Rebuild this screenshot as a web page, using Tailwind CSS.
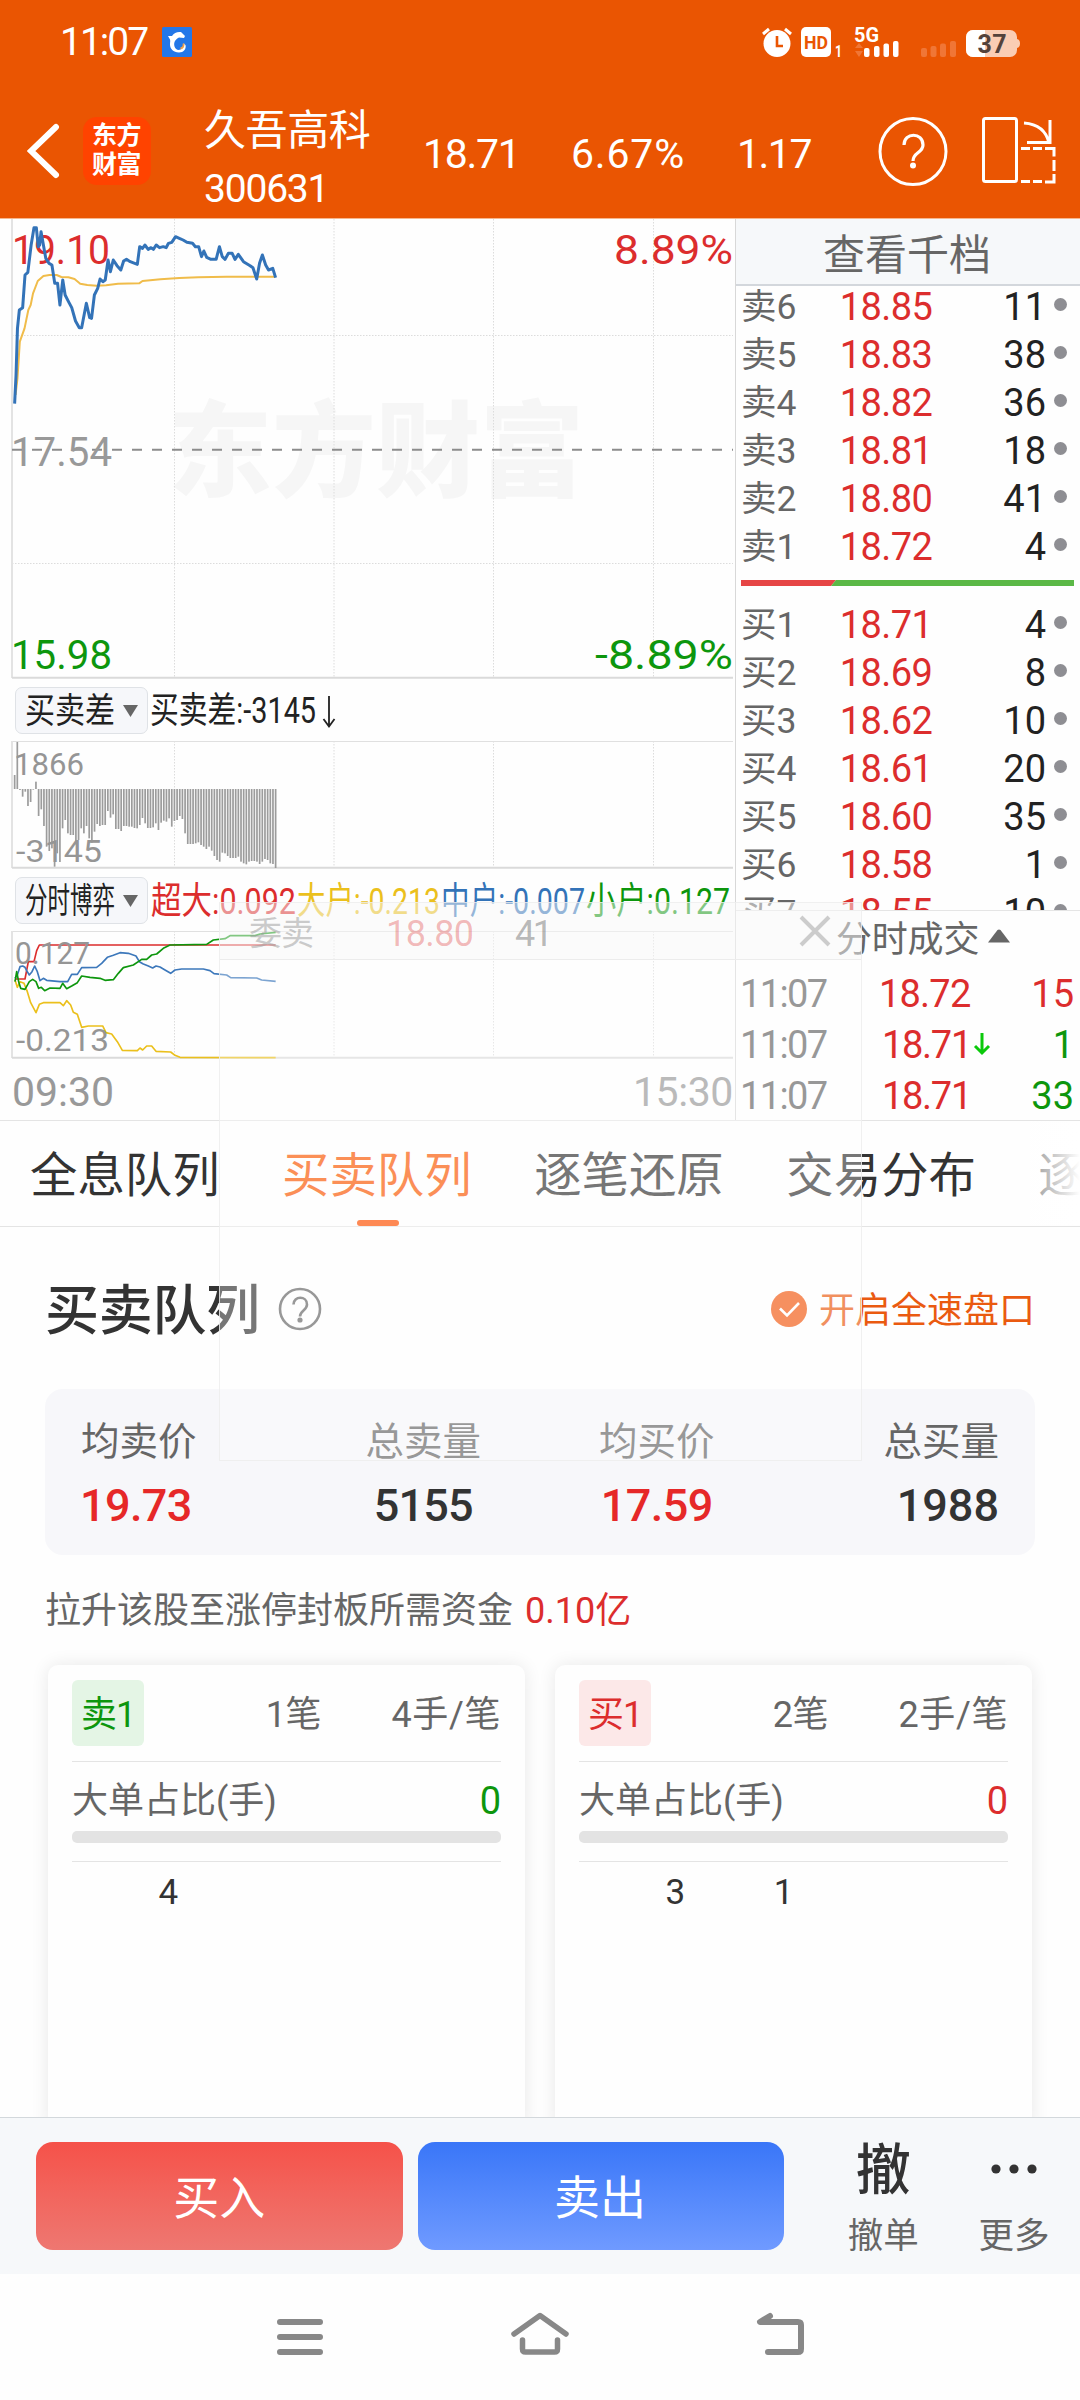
<!DOCTYPE html>
<html lang="zh-CN">
<head>
    <meta charset="UTF-8">
    <meta name="viewport" content="width=device-width, initial-scale=1"/>
    <title>久吾高科 300631 - 买卖队列</title>
    <script src="https://cdn.jsdelivr.net/npm/@tailwindcss/browser@4"></script>
</head>

<body class="bg-[#fefefe] font-['Roboto','Noto_Sans_CJK_SC',sans-serif] text-[#333]">
<div class="relative w-[1080px] h-[2400px] overflow-hidden flex flex-col">

    <!-- En-tête -->
    <header class="h-[219px] shrink-0 bg-[#ea5502] text-white border-b border-[#f6b78f]">
        <div class="h-[84px] flex items-center pl-[60px] pr-[60px]">
            <span class="w-[102px] text-[39px] leading-none tracking-[-2px]">11:07</span>
            <svg class="w-[30px] h-[30px]" viewBox="0 0 30 30">
                <rect width="30" height="30" rx="1.500" fill="#2377e8"/>
                <path d="M6 9l4 0c2-3 5-4.500 9-4l4 4-1 2-5-.5c-4 2-5.500 5-4.500 9 1 3 3.500 4 6 3 2-1 3-3 3-6l2 1.500c1 4-2 7.500-6.500 7.500-6 0-9-4-9-8 0-2 .5-3.500 0-5z" fill="#fff"/>
                <path d="M18.500 21.500c2.500-.5 3.500-2.500 3-5" stroke="#f3a24a" stroke-width="1.800" fill="none"/>
            </svg>
            <svg class="ml-auto w-[260px] h-[34px]" viewBox="760 25 260 34">
                <!-- alarme -->
                <circle cx="777" cy="43.5" r="13.5" fill="#fff"/>
                <path d="M763 34l6-5M791 34l-6-5" stroke="#fff" stroke-width="3"/>
                <path d="M777 36v10h6" stroke="#ea5502" stroke-width="2.6" fill="none"/>
                <rect x="801" y="27" width="30" height="30" rx="5" fill="#fff"/>
                <text x="804" y="49" font-size="19" font-weight="700" fill="#ea5502" textLength="24" lengthAdjust="spacingAndGlyphs">HD</text>
                <text x="835" y="57" font-size="17" font-weight="700" fill="#fff" textLength="7" lengthAdjust="spacingAndGlyphs">1</text>
                <text x="854" y="42" font-size="20" font-weight="700" fill="#fff" textLength="25" lengthAdjust="spacingAndGlyphs">5G</text>
                <path d="M855 48l4-5 4 5zM855 51h8l-4 6z" fill="#f07636"/>
                <g fill="#fff">
                    <rect x="864" y="48" width="5.5" height="9" rx="2"/>
                    <rect x="874" y="46" width="5.5" height="11" rx="2"/>
                    <rect x="883.5" y="43.5" width="5.5" height="13.5" rx="2"/>
                    <rect x="893" y="41" width="5.5" height="16" rx="2"/>
                </g>
                <g fill="#f07636">
                    <rect x="921" y="48" width="6" height="9" rx="2"/>
                    <rect x="930.5" y="46" width="6" height="11" rx="2"/>
                    <rect x="940" y="43.5" width="6" height="13.5" rx="2"/>
                    <rect x="950" y="41" width="6" height="16" rx="2"/>
                </g>
                <!-- batterie -->
                <rect x="966" y="30" width="51" height="27" rx="7" fill="#facdb4"/>
                <path d="M985 30h-12a7 7 0 0 0-7 7v13a7 7 0 0 0 7 7h12z" fill="#fff"/>
                <path d="M1017 39c4 0 4 9 0 9z" fill="#facdb4"/>
                <text x="977.5" y="52.5" font-size="25" font-weight="700" fill="#54423b" textLength="29">37</text>
            </svg>
        </div>
        <div class="h-[134px] flex items-center pl-[27px]">
            <svg class="w-[33px] h-[56px]" viewBox="0 0 33 56"><path d="M29 4L4 28l25 24" fill="none" stroke="#fff" stroke-width="6" stroke-linecap="round"/></svg>
            <div class="ml-[23px] w-[68px] h-[68px] rounded-[14px] bg-[#ff4300] text-[25px] font-bold leading-[29px] text-center pt-[4px] pr-[1px] tracking-[-0.5px]">东方<br>财富</div>
            <div class="ml-[53px] w-[219px] flex flex-col pt-[21px]">
                <span class="text-[42px] leading-[54px] tracking-[-0.4px]">久吾高科</span>
                <span class="text-[39px] leading-[62px] tracking-[-1.2px]">300631</span>
            </div>
            <div class="w-[454px] flex text-[41px] leading-none pt-[7px]">
                <span class="w-[148px] tracking-[-1.3px]">18.71</span>
                <span class="w-[166px] tracking-[0.8px]">6.67%</span>
                <span class="tracking-[-1.5px]">1.17</span>
            </div>
            <svg class="w-[72px] h-[72px]" viewBox="877 115 72 72">
                <circle cx="913" cy="151.5" r="33" fill="none" stroke="#fff" stroke-width="3"/>
                <path d="M904 145c0-13 19-13 19 0 0 8-10 7-10 16" fill="none" stroke="#fff" stroke-width="3.2"/>
                <circle cx="913" cy="165.500" r="3" fill="#fff"/>
            </svg>
            <svg class="ml-[32px] w-[76px] h-[70px]" viewBox="981 117 76 70" fill="none" stroke="#fff" stroke-width="3">
                <rect x="983.500" y="119.500" width="33" height="63" rx="2"/>
                <path d="M1024 124c14 1 22 7 25 20M1050 121v22.500h-23"/>
                <path d="M1021 149.500h9M1033 149.500h9M1045 149.500h9v8M1054 161v11M1054 175v8h-9M1042 182.500h-9M1030 182.500h-9"/>
            </svg>
        </div>
    </header>

    <!-- Graphiques + carnet d'ordres -->
    <main class="h-[901px] shrink-0 flex">
        <section class="w-[736px] border-r border-[#d8d8d8] flex flex-col">
            <!-- Cours de la séance -->
            <svg class="w-[735px] h-[460px]" viewBox="0 219 735 460">
                <text x="168" y="489" font-size="104" font-weight="900" fill="#f6f6f6" textLength="416" lengthAdjust="spacingAndGlyphs">东方财富</text>
                <g stroke="#dcdcdc" stroke-dasharray="1.500 1.500">
                    <path d="M174.500 219v458M334 219v458M493.500 219v458M653.500 219v458M12 335.500h721M12 563.500h721"/>
                </g>
                <path d="M12 219v459" stroke="#e3e3e3" stroke-width="2"/>
                <path d="M12 677.800h721" stroke="#dadada" stroke-width="2"/>
                <path d="M12 449.700h721" stroke="#8c8c8c" stroke-width="2" stroke-dasharray="10 10"/>
                <g font-size="41">
                    <text x="12" y="264" fill="#dc2d2d" textLength="98" lengthAdjust="spacingAndGlyphs">19.10</text>
                    <text x="614" y="264" fill="#dc2d2d" textLength="119" lengthAdjust="spacingAndGlyphs">8.89%</text>
                    <text x="11" y="466" fill="#999" textLength="101" lengthAdjust="spacingAndGlyphs">17.54</text>
                    <text x="11" y="669" fill="#0d960d" textLength="101" lengthAdjust="spacingAndGlyphs">15.98</text>
                    <text x="595" y="669" fill="#0d960d" textLength="138" lengthAdjust="spacingAndGlyphs">-8.89%</text>
                </g>
                <g transform="translate(0 215) scale(.4719 .33333)" fill="none" stroke-linejoin="round">
                    <polyline vector-effect="non-scaling-stroke" stroke="#f0bc4a" stroke-width="2" points="33,540 37,490 42,380 52,340 60,285 65,270 70,235 80,198 92,183 105,180 120,180 130,186 145,187 158,192 170,206 185,210 205,212 225,211 250,206 295,205 302,198 340,193 380,189 420,187 480,185 584,185"/>
                    <polyline vector-effect="non-scaling-stroke" stroke="#3373b8" stroke-width="3" points="31,566 34,480 37,340 41,285 48,278 53,180 59,172 66,90 72,38 77,38 81,95 84,90 87,50 92,90 97,130 104,145 110,150 116,205 122,205 127,270 133,195 138,240 146,262 152,278 160,318 168,338 173,338 183,265 190,308 194,310 200,240 207,220 212,192 218,200 223,195 229,135 234,170 240,135 248,152 256,165 262,138 268,133 276,140 291,148 296,95 302,100 307,90 314,103 320,98 325,103 331,90 338,98 346,95 352,98 357,85 364,82 372,65 380,70 388,75 396,82 408,85 414,95 421,95 427,125 432,108 438,127 447,133 458,133 465,95 471,125 477,133 484,115 492,115 498,133 505,118 516,140 530,152 536,158 544,192 550,145 556,120 563,150 569,165 578,160 584,188"/>
                </g>
            </svg>

            <!-- Indicateur : différence achat / vente -->
            <div class="h-[62px] flex items-center pl-[15px]">
                <button class="w-[133px] h-[47px] rounded-[7px] border border-[#dfe2e6] bg-[#f6f7fa]">
                    <svg class="w-[131px] h-[45px]" viewBox="0 0 131 45">
                        <text x="9" y="35" font-size="35" fill="#222" textLength="90" lengthAdjust="spacingAndGlyphs">买卖差</text>
                        <path d="M107 17h15l-7.500 12z" fill="#666"/>
                    </svg>
                </button>
                <svg class="w-[586px] h-[47px]" viewBox="148 686 586 47">
                    <text y="722" font-size="36" fill="#222"><tspan x="150" textLength="166" lengthAdjust="spacingAndGlyphs">买卖差:-3145</tspan></text>
                    <path d="M329 695v30M323.500 718l5.500 7.500 5.500-7.500" fill="none" stroke="#222" stroke-width="1.800"/>
                </svg>
            </div>
            <svg class="w-[735px] h-[128px]" viewBox="0 741 735 128">
                <path d="M174.500 741v127M334 741v127M493.500 741v127M653.500 741v127" stroke="#dcdcdc" stroke-dasharray="1.500 1.500"/>
                <path d="M12 741.500h721" stroke="#e0e0e0"/>
                <path d="M12 741v127" stroke="#e3e3e3" stroke-width="2"/>
                <path d="M12 867.800h721" stroke="#dadada" stroke-width="2"/>
                <g id="diff-bars" fill="#9c9c9c"></g>
                <g font-size="32" fill="#959595">
                    <text x="14" y="774.500" textLength="70" lengthAdjust="spacingAndGlyphs">1866</text>
                    <text x="16" y="861.500" textLength="86" lengthAdjust="spacingAndGlyphs">-3145</text>
                </g>
            </svg>

            <!-- Indicateur : flux par taille d'ordre -->
            <div class="h-[62px] flex items-center pl-[15px]">
                <button class="w-[133px] h-[47px] rounded-[7px] border border-[#dfe2e6] bg-[#f6f7fa]">
                    <svg class="w-[131px] h-[45px]" viewBox="0 0 131 45">
                        <text x="9" y="35" font-size="35" fill="#222" textLength="90" lengthAdjust="spacingAndGlyphs">分时博弈</text>
                        <path d="M107 17h15l-7.500 12z" fill="#666"/>
                    </svg>
                </button>
                <svg class="w-[586px] h-[47px]" viewBox="148 876 586 47" font-size="37">
                    <text x="151" y="913" fill="#dc2d2d" textLength="145" lengthAdjust="spacingAndGlyphs">超大:0.092</text>
                    <text x="297" y="913" fill="#ebc01c" textLength="143" lengthAdjust="spacingAndGlyphs">大户:-0.213</text>
                    <text x="441" y="913" fill="#3373b8" textLength="144" lengthAdjust="spacingAndGlyphs">中户:-0.007</text>
                    <text x="586" y="913" fill="#0d960d" textLength="144" lengthAdjust="spacingAndGlyphs">小户:0.127</text>
                </svg>
            </div>
            <svg class="w-[735px] h-[128px]" viewBox="0 931 735 128">
                <path d="M174.500 931v127M334 931v127M493.500 931v127M653.500 931v127" stroke="#dcdcdc" stroke-dasharray="1.500 1.500"/>
                <path d="M12 931.500h721" stroke="#e0e0e0"/>
                <path d="M12 931v127" stroke="#e3e3e3" stroke-width="2"/>
                <path d="M12 1057.800h721" stroke="#dadada" stroke-width="2"/>
                <g transform="translate(0 680) scale(.33333)" fill="none" stroke-width="5" stroke-linejoin="round">
                    <polyline stroke="#dc2d2d" points="45,897 75,897 85,845 102,845 110,812 118,795 827,795"/>
                    <polyline stroke="#3d78bb" points="45,895 52,885 60,860 68,858 75,862 80,872 88,885 96,875 104,858 112,875 120,902 130,895 140,901 180,905 203,905 215,883 232,883 245,863 290,862 305,850 322,832 340,826 360,818 385,820 408,828 418,845 430,852 445,858 458,864 468,858 480,861 495,870 512,880 525,870 545,867 610,867 630,872 642,881 680,885 692,893 770,894 785,900 827,904"/>
                    <polyline stroke="#ebc01c" points="45,900 52,922 60,905 72,910 82,935 92,968 108,998 118,973 130,968 180,968 190,977 200,962 212,975 220,997 232,1003 245,1042 265,1038 308,1038 318,1058 335,1062 352,1085 367,1111 412,1112 420,1104 428,1110 440,1098 455,1098 468,1114 512,1116 525,1126 540,1132 827,1133"/>
                    <polyline stroke="#0d960d" points="45,905 50,875 56,905 62,925 75,928 88,905 98,898 108,905 116,925 124,922 134,932 150,924 180,925 188,910 200,926 215,918 232,908 245,888 270,892 300,895 315,901 340,899 355,880 370,863 400,855 425,838 440,838 455,825 470,822 490,805 510,795 620,793 640,780 675,776 690,767 765,767 780,762 827,757"/>
                </g>
                <g font-size="32" fill="#959595">
                    <text x="15" y="964" textLength="75" lengthAdjust="spacingAndGlyphs">0.127</text>
                    <text x="16" y="1051" textLength="93" lengthAdjust="spacingAndGlyphs">-0.213</text>
                </g>
            </svg>
            <div class="flex justify-between pl-[12px] pr-[2px] pt-[12px] text-[41px] leading-[42px] text-[#999]">
                <span>09:30</span>
                <span class="tracking-[-0.4px]">15:30</span>
            </div>
        </section>

        <!-- Carnet d'ordres -->
        <aside class="w-[344px] flex flex-col">
            <div class="h-[67px] shrink-0 border-b-2 border-[#d3d7dc] bg-[#f6f8fa] text-[42px] leading-[73px] text-center text-[#666] pr-[2px]">查看千档</div>
            <div class="h-[627px] shrink-0 -mt-[3px] overflow-hidden text-[38px]">
                <div id="asks"></div>
                <div class="h-[6px] ml-[5px] mr-[6px] mt-[9px] mb-[15px]">
                    <svg class="block w-[333px] h-[6px]" viewBox="0 0 333 6">
                        <path d="M0 0h95l-5 6H0z" fill="#e64545"/>
                        <path d="M95 0h238v6H90z" fill="#5bb846"/>
                    </svg>
                </div>
                <div id="bids"></div>
            </div>
            <div class="h-[63px] shrink-0 border-t border-[#e5e5e5] flex pt-[3px] pl-[100px] text-[36px] leading-[52px] text-[#666] tracking-[-0.2px]">
                分时成交
                <svg class="ml-[9px] mt-[15px] w-[22px] h-[15px]" viewBox="0 0 22 15"><path d="M0 13.500L9.500 1q1.500-1 3 0L22 13.500z" fill="#666"/></svg>
            </div>
            <div class="flex flex-col text-[38px] leading-[51px] -mt-[4px]">
                <div class="h-[51px] shrink-0 flex pl-[4px] pr-[6px]">
                    <span class="w-[139px] text-[#666] tracking-[-1.6px]">11:07</span>
                    <span class="text-[#dc2d2d] tracking-[-0.8px]">18.72</span>
                    <span class="ml-auto text-[#dc2d2d]">15</span>
                </div>
                <div class="h-[51px] shrink-0 flex pl-[4px] pr-[6px]">
                    <span class="w-[142px] text-[#666] tracking-[-1.6px]">11:07</span>
                    <span class="text-[#dc2d2d] tracking-[-1.3px]">18.71</span>
                    <svg class="ml-[2px] mt-[12px] w-[18px] h-[24px]" viewBox="0 0 18 24"><path d="M9 1v20M2 14l7 7 7-7" fill="none" stroke="#0bc90b" stroke-width="3"/></svg>
                    <span class="ml-auto text-[#0d960d]">1</span>
                </div>
                <div class="h-[51px] shrink-0 flex pl-[4px] pr-[6px]">
                    <span class="w-[142px] text-[#666] tracking-[-1.6px]">11:07</span>
                    <span class="text-[#dc2d2d] tracking-[-1.3px]">18.71</span>
                    <span class="ml-auto text-[#0d960d]">33</span>
                </div>
            </div>
        </aside>
    </main>

    <!-- Onglets -->
    <nav class="relative h-[107px] shrink-0 border-y border-[#e4e4e4] flex gap-[62.5px] pl-[30px] text-[47.4px] leading-[110px] whitespace-nowrap overflow-hidden">
        <a class="shrink-0">全息队列</a>
        <a class="shrink-0 relative text-[#f95804]">买卖队列<span class="absolute left-[75px] bottom-0 w-[42px] h-[6px] rounded-full bg-[#fe5000]"></span></a>
        <a class="shrink-0">逐笔还原</a>
        <a class="shrink-0">交易分布</a>
        <a class="shrink-0">逐</a>
        <span class="absolute right-0 top-0 w-[50px] h-[104px] bg-linear-to-r from-white/50 to-white"></span>
    </nav>

    <!-- File d'attente achat / vente -->
    <section class="h-[890px] shrink-0 overflow-hidden">
        <div class="mt-[50px] h-[64px] flex items-center pl-[45px] pr-[45px]">
            <h1 class="pt-[6px] text-[54px] leading-[64px] font-medium tracking-[-0.3px]">买卖队列</h1>
            <svg class="ml-[18px] w-[44px] h-[44px]" viewBox="0 0 44 44" fill="none" stroke="#666" stroke-width="2.600">
                <circle cx="22" cy="22" r="20"/>
                <path d="M15.500 17.500c0-9 13.500-9 13.500 0 0 6-7 6-7 12"/>
                <circle cx="22" cy="33" r="1.300"/>
            </svg>
            <svg class="ml-auto w-[36px] h-[36px]" viewBox="0 0 36 36"><circle cx="18" cy="18" r="18" fill="#f25a12"/><path d="M9 17.500l7 7L28 12" fill="none" stroke="#fff" stroke-width="2.600"/></svg>
            <span class="ml-[12px] pt-[3px] text-[36px] leading-none text-[#ea5a10]">开启全速盘口</span>
        </div>

        <div class="mt-[48px] mx-[45px] h-[166px] rounded-[18px] bg-[#f7f7fa] pt-[26px] px-[36px] flex justify-between text-[38.5px] leading-[54px] text-[#666]">
            <div class="w-[400px] flex justify-between">
                <div>均卖价<p class="mt-[10px] -ml-[1px] text-[45px] font-medium tracking-[-0.6px] text-[#e62828]">19.73</p></div>
                <div class="text-center">总卖量<p class="mt-[10px] text-[45px] font-medium tracking-[-0.8px] text-[#333]">5155</p></div>
            </div>
            <div class="w-[400px] flex justify-between">
                <div class="text-center">均买价<p class="mt-[10px] text-[45px] font-medium tracking-[-0.6px] text-[#e62828]">17.59</p></div>
                <div class="text-right">总买量<p class="mt-[10px] text-[45px] font-medium text-[#333]">1988</p></div>
            </div>
        </div>

        <p class="mt-[32px] pl-[45px] text-[36px] leading-[48px] text-[#666]">拉升该股至涨停封板所需资金 <span class="ml-[3px] text-[#dc2d2d]">0.10亿</span></p>

        <div class="mt-[30px] px-[48px] flex gap-[30px] text-[36px] text-[#666]">
            <div class="w-[477px] h-[470px] rounded-[10px] bg-[#fefefe] shadow-[0_0_18px_rgba(0,0,0,0.09)] px-[24px] pt-[15px]">
                <div class="flex items-center h-[66px]">
                    <span class="w-[72px] h-[66px] rounded-[6px] bg-[#e4f5e5] text-[#0d960d] text-center leading-[70px] tracking-[-1px]">卖1</span>
                    <span class="ml-auto pt-[4px] tracking-[-0.5px]">1笔</span>
                    <span class="w-[180px] pt-[4px] text-right tracking-[0.6px]">4手/笔</span>
                </div>
                <div class="mt-[15px] pt-[15px] border-t border-[#e4e4e4] flex justify-between leading-[48px]">
                    <span>大单占比(手)</span>
                    <span class="text-[38px] text-[#0d960d]">0</span>
                </div>
                <div class="mt-[6px] h-[12px] rounded-[5px] bg-[#e3e3e3]"></div>
                <div class="mt-[18px] pt-[12px] border-t border-[#e4e4e4] grid grid-cols-4 text-right text-[35px] leading-[38px] text-[#333]">
                    <span class="pr-[1px]">4</span>
                </div>
            </div>
            <div class="w-[477px] h-[470px] rounded-[10px] bg-[#fefefe] shadow-[0_0_18px_rgba(0,0,0,0.09)] px-[24px] pt-[15px]">
                <div class="flex items-center h-[66px]">
                    <span class="w-[72px] h-[66px] rounded-[6px] bg-[#fce8e8] text-[#dc2d2d] text-center leading-[70px] tracking-[-1px]">买1</span>
                    <span class="ml-auto pt-[4px] tracking-[-0.5px]">2笔</span>
                    <span class="w-[180px] pt-[4px] text-right tracking-[0.6px]">2手/笔</span>
                </div>
                <div class="mt-[15px] pt-[15px] border-t border-[#e4e4e4] flex justify-between leading-[48px]">
                    <span>大单占比(手)</span>
                    <span class="text-[38px] text-[#dc2d2d]">0</span>
                </div>
                <div class="mt-[6px] h-[12px] rounded-[5px] bg-[#e3e3e3]"></div>
                <div class="mt-[18px] pt-[12px] border-t border-[#e4e4e4] grid grid-cols-4 text-right text-[35px] leading-[38px] text-[#333]">
                    <span class="pr-[1px]">3</span>
                    <span>1</span>
                </div>
            </div>
        </div>
    </section>

    <!-- Barre d'actions -->
    <footer class="relative h-[157px] shrink-0 border-t border-[#d3d8dc] bg-[#f6f8fa] flex pt-[24px] pl-[36px]">
        <button class="w-[367px] h-[108px] pt-[5px] rounded-[17px] bg-linear-to-b from-[#f55149] to-[#ee7771] text-white text-[46px]">买入</button>
        <button class="ml-[15px] w-[367px] h-[108px] pt-[5px] pr-[2px] rounded-[17px] bg-linear-to-b from-[#3976f8] to-[#6f9aff] text-white text-[46px]">卖出</button>
        <div class="ml-[34px] w-[130px] flex flex-col items-center">
            <span class="text-[55px] leading-[56px] font-medium">撤</span>
            <span class="mt-[16px] text-[35.5px] leading-[44px] text-[#666]">撤单</span>
        </div>
        <div class="w-[132px] flex flex-col items-center">
            <svg class="w-[50px] h-[56px]" viewBox="0 0 50 56" fill="#333"><circle cx="7" cy="27" r="4.600"/><circle cx="25" cy="27" r="4.600"/><circle cx="43" cy="27" r="4.600"/></svg>
            <span class="mt-[16px] text-[35.5px] leading-[44px] text-[#666]">更多</span>
        </div>
    </footer>

    <!-- Navigation système -->
    <div class="h-[126px] flex justify-center gap-[180px] pt-[33px]">
        <svg class="w-[60px] h-[60px]" viewBox="270 2307 60 60" stroke="#888" stroke-width="6" stroke-linecap="round"><path d="M280 2322h40M280 2337h40M280 2352h40"/></svg>
        <svg class="w-[60px] h-[60px]" viewBox="510 2307 60 60" fill="none" stroke="#888" stroke-width="5.500" stroke-linecap="round" stroke-linejoin="round"><path d="M514 2334l26-18.500 26 18.500M522.500 2340v9q0 3 3 3h29q3 0 3-3v-9"/></svg>
        <svg class="w-[60px] h-[60px]" viewBox="750 2307 60 60" fill="none" stroke="#888" stroke-width="6" stroke-linecap="round" stroke-linejoin="round"><path d="M770 2316l-10 6h38q3 0 3 3v24q0 3-3 3h-30"/></svg>
    </div>

    <!-- Fenêtre de passage d'ordre en train de disparaître -->
    <div class="absolute left-[219px] top-[902px] w-[643px] h-[559px] border border-[#ececec]/80 bg-white/33">
        <div class="h-[57px] border-b border-[#ececec] bg-[#f4f4f4]/25">
            <svg class="block w-[641px] h-[56px]" viewBox="220 903 641 56" font-size="36">
                <text x="249" y="945" font-size="33" fill="#999" fill-opacity=".5" textLength="65">委卖</text>
                <text x="386" y="946" fill="#dc2d2d" fill-opacity=".32" textLength="88">18.80</text>
                <text x="515" y="946" fill="#666" fill-opacity=".45" textLength="38">41</text>
                <path d="M801 917l28 28M829 917l-28 28" stroke="#ccc" stroke-width="4"/>
            </svg>
        </div>
    </div>
</div>

<script>
    const asks = [['卖6', '18.85', 11], ['卖5', '18.83', 38], ['卖4', '18.82', 36], ['卖3', '18.81', 18], ['卖2', '18.80', 41], ['卖1', '18.72', 4]];
    const bids = [['买1', '18.71', 4], ['买2', '18.69', 8], ['买3', '18.62', 10], ['买4', '18.61', 20], ['买5', '18.60', 35], ['买6', '18.58', 1], ['买7', '18.55', 10]];

    function row([label, price, qty]) {
        return `
          <div class="h-[48px] leading-[48px] flex items-center pl-[5px] pr-[13px]">
            <span class="w-[80px] text-[35.5px] text-[#666]">${label}</span>
            <span class="w-[130px] text-center text-[#dc2d2d] tracking-[-0.6px]">${price}</span>
            <span class="w-[95px] text-right text-[#222]">${qty}</span>
            <i class="ml-auto w-[13px] h-[13px] mb-[6px] rounded-full bg-[#8e8e93]"></i>
          </div>`;
    }
    document.getElementById('asks').innerHTML = asks.map(row).join('');
    document.getElementById('bids').innerHTML = bids.map(row).join('');

    // hauteur de chaque barre, une par minute (positif = au-dessus de la base)
    const diff = [42, 141, -3, -23, -8, -51, -39, -2, 22, -81, -61, -111, -173, -186, -178, -233, -193, -219, -118, -93, -133, -138, -138, -158, -153,
        -118, -133, -111, -148, -161, -128, -105, -111, -108, -108, -66, -86, -76, -120, -120, -126, -111, -111, -113, -113, -117, -118, -108, -87, -103,
        -117, -117, -115, -103, -123, -101, -95, -98, -88, -113, -96, -93, -81, -90, -133, -165, -165, -165, -163, -160, -168, -173, -180, -173, -185,
        -201, -213, -218, -191, -193, -201, -207, -207, -207, -203, -218, -223, -226, -218, -216, -216, -218, -225, -218, -210, -213, -223, -225, -237];
    document.getElementById('diff-bars').innerHTML = diff.map((v, i) => {
        const h = Math.abs(v) / 3;
        return `<rect x="${(13.8 + i * 2.663).toFixed(2)}" y="${v > 0 ? 789 - h : 789}" width="1.7" height="${h}"/>`;
    }).join('');
</script>
</body>

</html>
